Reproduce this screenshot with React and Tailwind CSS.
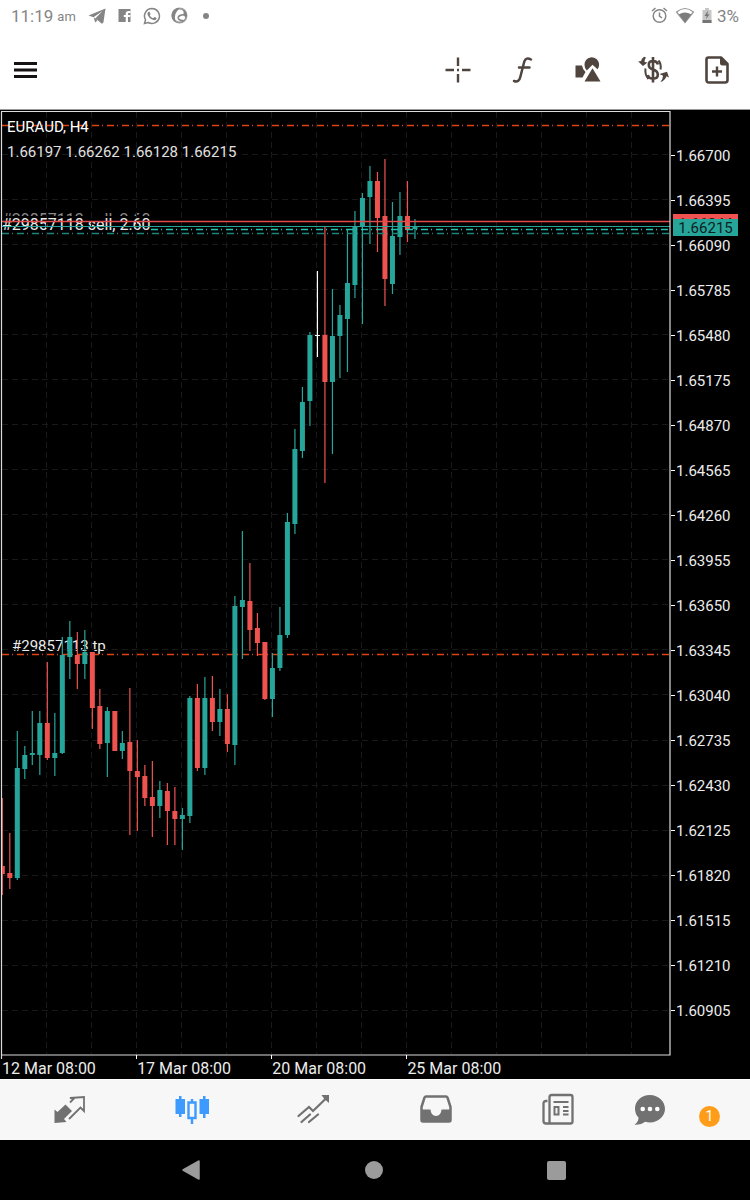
import React from "react";

const UP = "#26a69a";
const DOWN = "#ef5350";

// [high, low, bodyTop, bodyBottom, direction]
const candles = [
  [798, 895, 866, 874, "d"],
  [833, 889, 873, 878, "d"],
  [731, 880, 768, 878, "u"],
  [746, 779, 755, 769, "u"],
  [711, 765, 753, 755, "u"],
  [711, 775, 723, 755, "u"],
  [662, 760, 723, 758, "d"],
  [713, 776, 753, 758, "u"],
  [637, 754, 655, 753, "u"],
  [621, 679, 637, 657, "u"],
  [632, 689, 655, 664, "d"],
  [630, 679, 652, 664, "u"],
  [652, 729, 652, 708, "d"],
  [689, 749, 706, 744, "d"],
  [707, 777, 711, 743, "u"],
  [711, 751, 711, 751, "d"],
  [731, 759, 743, 751, "u"],
  [688, 835, 742, 771, "d"],
  [740, 831, 771, 777, "d"],
  [765, 806, 776, 798, "d"],
  [761, 837, 797, 806, "d"],
  [781, 818, 790, 806, "u"],
  [783, 845, 791, 811, "d"],
  [787, 845, 811, 819, "d"],
  [808, 850, 815, 819, "u"],
  [696, 823, 698, 816, "u"],
  [684, 771, 698, 768, "d"],
  [677, 775, 698, 768, "u"],
  [676, 731, 698, 722, "d"],
  [689, 736, 709, 722, "u"],
  [694, 752, 709, 744, "d"],
  [596, 765, 606, 745, "u"],
  [531, 659, 600, 607, "u"],
  [563, 651, 601, 630, "d"],
  [613, 656, 628, 643, "d"],
  [642, 700, 642, 699, "d"],
  [653, 717, 668, 699, "u"],
  [607, 671, 635, 668, "u"],
  [513, 638, 522, 635, "u"],
  [429, 534, 449, 524, "u"],
  [387, 458, 402, 451, "u"],
  [332, 426, 335, 401, "u"],
  [271, 357, 335, 336, "n"],
  [226, 483, 335, 382, "d"],
  [289, 454, 336, 382, "u"],
  [305, 378, 315, 336, "u"],
  [230, 372, 283, 319, "u"],
  [211, 298, 227, 285, "u"],
  [193, 324, 198, 226, "u"],
  [166, 244, 181, 197, "u"],
  [172, 252, 181, 218, "d"],
  [159, 306, 216, 279, "d"],
  [202, 294, 236, 284, "u"],
  [192, 255, 216, 237, "u"],
  [181, 242, 216, 230, "d"],
  [219, 239, 226, 229, "u"],
];

const prices = Array.from({ length: 20 }, (_, i) => (1.667 - i * 0.00305).toFixed(5));
const times = ["12 Mar 08:00", "17 Mar 08:00", "20 Mar 08:00", "25 Mar 08:00"];

function Plot() {
  return (
    <svg viewBox="0 110 671 949" preserveAspectRatio="none" className="relative block h-[949px] w-full">
      <g stroke="#181818" strokeDasharray="6 4">
        {Array.from({ length: 14 }, (_, i) => (
          <line key={i} x1={46.5 + i * 45} x2={46.5 + i * 45} y1="112" y2="1054" />
        ))}
        {prices.map((p, i) => (
          <line key={p} x1="2" x2="669" y1={Math.floor(154.5 + i * 45.04) + 0.5} y2={Math.floor(154.5 + i * 45.04) + 0.5} />
        ))}
      </g>
      <g stroke="#e0430f" strokeWidth="1.3" strokeDasharray="7 3 1 4">
        <line x1="2" x2="670" y1="125.5" y2="125.5" />
        <line x1="2" x2="670" y1="654.5" y2="654.5" />
      </g>
      {candles.map(([hi, lo, top, bottom, dir], i) => {
        const x = 2.3 + i * 7.503;
        const color = dir === "u" ? UP : dir === "d" ? DOWN : "#ffffff";
        const left = Math.max(x - 2.5, 2);
        return (
          <g key={i} fill={color}>
            <rect x={x - 0.6} y={hi} width="1.2" height={lo - hi} />
            <rect x={left} y={top} width={x + 2.5 - left} height={bottom - top} />
          </g>
        );
      })}
      <line x1="2" x2="670" y1="221.5" y2="221.5" stroke="#e04a4c" strokeWidth="1.3" />
      <line x1="2" x2="670" y1="226.5" y2="226.5" stroke={UP} />
      <line x1="151" x2="670" y1="229.5" y2="229.5" stroke="#24c4b2" strokeWidth="1.7" strokeDasharray="7 3 1 4" />
      <line x1="2" x2="670" y1="233.5" y2="233.5" stroke="#1b857b" strokeWidth="1.4" strokeDasharray="7 3 1 4" />
      <path d="M1.5 1059V111.500M1 111.500H670.500M670 111V1055.500M1 1055H670.500" stroke="#dcdcdc" strokeWidth="1.2" fill="none" />
      <path d="M136.500 1055V1059M271.500 1055V1059M406.500 1055V1059" stroke="#ffffff" fill="none" />
    </svg>
  );
}

function StatusBar() {
  return (
    <div className="flex h-[31px] items-center justify-between pl-[11px] pr-[11px] text-[17px] leading-5 text-[#858585]">
      <div className="flex items-center">
        <span>11:19</span>
        <span className="ml-1 mt-[3px] text-[13px]">am</span>
        <svg width="18" height="16" viewBox="89 8 18 16" className="ml-3" fill="#858585">
          <path d="M106.500 8.500L89.500 15.500L94.500 17.300L103.500 11L96.500 18.300L102.500 23.500Q104 23.800 104.500 22Z" />
          <path d="M94.800 17.500L96.200 22.500L98.500 20.200L96.800 18.500Z" />
        </svg>
        <svg width="13" height="13" viewBox="0 0 13 13" className="ml-3">
          <path fill="#858585" d="M0.500 0H12.500V13H10V8H12L12.300 6H10V5Q10 4 11.200 4H12.300V2H10.500Q7.700 2 7.700 4.700V6H5.800V8H7.700V13H0.500Z" />
        </svg>
        <svg width="18" height="18" viewBox="0 0 24 24" className="ml-3" fill="#858585">
          <path d="M17.472 14.382c-.297-.149-1.758-.867-2.030-.967-.273-.099-.471-.148-.670.150-.197.297-.767.966-.940 1.164-.173.199-.347.223-.644.075-.297-.150-1.255-.463-2.390-1.475-.883-.788-1.480-1.761-1.653-2.059-.173-.297-.018-.458.130-.606.134-.133.298-.347.446-.520.149-.174.198-.298.298-.497.099-.198.050-.371-.025-.520-.075-.149-.669-1.612-.916-2.207-.242-.579-.487-.500-.669-.510-.173-.008-.371-.010-.570-.010-.198 0-.520.074-.792.372-.272.297-1.040 1.016-1.040 2.479 0 1.462 1.065 2.875 1.213 3.074.149.198 2.096 3.200 5.077 4.487.709.306 1.262.489 1.694.625.712.227 1.360.195 1.871.118.571-.085 1.758-.719 2.006-1.413.248-.694.248-1.289.173-1.413-.074-.124-.272-.198-.570-.347" />
          <path d="M12 2a10 10 0 0 0-8.600 15.100L2 22l5-1.300A10 10 0 1 0 12 2Z" fill="none" stroke="#858585" strokeWidth="2" />
        </svg>
        <svg width="17" height="17" viewBox="0 0 17 17" className="ml-[10px]">
          <circle cx="8.500" cy="8.500" r="7" fill="none" stroke="#a0a0a0" strokeWidth="2" />
          <path fill="#858585" d="M9 1A7.500 7.500 0 0 0 5 15.300Q2.500 9 5.500 5Q7 2.500 9 1ZM11 1.500Q16 4 16 9L14.500 11Q14 8.500 12 8.500Q9 8.500 7.500 11Q10 13.500 14 13Q10 17 6 15.500Q10 16 11.500 14Q6 14 6.500 10Q7.500 7 12.500 7Q13 3 11 1.500Z" />
        </svg>
        <span className="ml-[15px] size-[6px] rounded-full bg-[#858585]" />
      </div>
      <div className="flex items-center">
        <svg width="17" height="17" viewBox="0 0 17 17" fill="none" stroke="#858585" strokeWidth="1.500">
          <circle cx="8.500" cy="9" r="6.300" />
          <path d="M8.500 5.500V9.200L11 11M1 4L4.500 1M16 4L12.500 1" />
        </svg>
        <svg width="20" height="17" viewBox="0 0 20 17" className="ml-[7px]">
          <path d="M1.500 5Q10-2 18.500 5L10 15.500Z" fill="none" stroke="#959595" strokeWidth="1.200" />
          <path d="M3.800 7.500Q10 3.500 16.200 7.500L10 15.500Z" fill="#7d7d7d" />
        </svg>
        <svg width="10" height="15" viewBox="0 0 10 15" className="ml-[7px]">
          <path d="M3 0H7V2H9.500V15H0.500V2H3Z" fill="#c6c6c6" />
          <path d="M0.500 12H9.500V15H0.500ZM6 2.500L2.500 8H4.700L4 11L7.500 6.500H5.500Z" fill="#767676" />
        </svg>
        <span className="ml-[5px]">3%</span>
      </div>
    </div>
  );
}

const tools = [
  {
    label: "Crosshair",
    icon: (
      <path d="M14 1.500V10M14 18V26.500M1.500 14H10M18 14H26.500M13 14H15" stroke="#50443f" strokeWidth="2.400" fill="none" />
    ),
  },
  {
    label: "Indicators",
    icon: (
      <path d="M22 3.500Q17 .8 15.300 5.500L11.300 21Q10 26.800 5 25M10 11.500H20.500" stroke="#50443f" strokeWidth="2.500" fill="none" strokeLinecap="round" />
    ),
  },
  {
    label: "Objects",
    icon: (
      <g fill="#50443f">
        <path d="M1.500 9.500H8Q8.500 13 11.500 16L8.500 21.500H1.500Z" />
        <path d="M10.500 9A7.300 7.300 0 1 1 23.500 13.200L18.500 8.700L12.800 14.500Q10.500 12 10.500 9Z" />
        <path d="M18.500 12.300L26.500 25.500H10.500Z" />
      </g>
    ),
  },
  {
    label: "Trade",
    icon: (
      <g stroke="#50443f" fill="none" strokeWidth="2.600">
        <path d="M14 1V26.500M19 8.500Q18 5 14 5Q9.800 5 9.800 8.700Q9.800 12.300 14 13.500Q18.800 15 18.800 18.700Q18.800 22.600 14 22.600Q9.500 22.600 8.800 19" />
        <path d="M6.500 12.500Q5.500 18.500 9.500 23M19.500 4.500Q22.500 8 21.500 13.500" strokeWidth="2" />
        <path d="M5 .8Q2.500 2.500 2 5L-.8 5.500L4 10L8.500 6.500L5.500 6Q5.500 3 7 1.500ZM20.500 18L28 15.800L30 21.500L27.500 20.200Q26 24.500 21.500 26Q24 23 24 19.800Z" fill="#50443f" stroke="none" />
      </g>
    ),
  },
  {
    label: "New order",
    icon: (
      <g stroke="#50443f" fill="none" strokeWidth="2.600">
        <path d="M5.500 1.500H17L23.500 8V24Q23.500 26.500 21 26.500H5Q2.500 26.500 2.500 24V3.500Q2.500 1.500 4.500 1.500Z" strokeLinejoin="round" />
        <path d="M16 1.500H18L23.500 7.500V9.500H18.500Q16 9.500 16 7Z" fill="#50443f" stroke="none" />
        <path d="M13 10.500V20.500M8 15.500H18" strokeWidth="2.400" />
      </g>
    ),
  },
];

function Toolbar() {
  return (
    <header className="flex h-[79px] items-center justify-between border-b border-[#9a9a9a]">
      <button aria-label="Menu" className="ml-[14px] flex h-10 items-center">
        <svg width="23" height="16" viewBox="0 0 23 16" fill="#161214">
          <path d="M0 0H23V3H0ZM0 6.500H23V9.500H0ZM0 13H23V16H0Z" />
        </svg>
      </button>
      <div className="flex">
        {tools.map((t) => (
          <button key={t.label} aria-label={t.label} className="flex h-10 w-[65px] items-center justify-center">
            <svg width="28" height="28" viewBox="0 0 28 28" className="overflow-visible">{t.icon}</svg>
          </button>
        ))}
      </div>
    </header>
  );
}

function Chart() {
  return (
    <main className="flex bg-black text-[15px] leading-5 text-[#ececec]">
      <div className="relative min-w-0 flex-1">
        <span className="absolute left-[2px] top-[103px] h-[3px] overflow-hidden whitespace-nowrap text-[16px] text-[#8a8a8a]">
          <span className="-mt-[3px] block">#29857113 sell, 2.60</span>
        </span>
        <span className="absolute left-[2px] top-[105px] whitespace-nowrap text-[16px]">#29857118 sell, 2.60</span>
        <span className="absolute left-[12px] top-[526px] whitespace-nowrap">#29857113 tp</span>
        <Plot />
        <div className="absolute left-[7px] top-[7px] text-white">
          <h1>EURAUD, H4</h1>
          <p className="mt-[5px] text-[#e0e0e0]">1.66197 1.66262 1.66128 1.66215</p>
        </div>
        <div className="flex h-5 pl-[2px] text-[16px]">
          {times.map((t) => (
            <span key={t} className="w-[20.2%] whitespace-nowrap">{t}</span>
          ))}
        </div>
      </div>
      <div className="relative w-[79px] pt-[23px]">
        {prices.map((p) => (
          <div key={p} className="flex h-[45px] items-center">
            <span className="h-px w-1 bg-white" />
            <span className="ml-[1px]">{p}</span>
          </div>
        ))}
        <div className="absolute left-[2px] top-[104px] h-[22px] w-[65px] overflow-hidden bg-[#f05252] text-center text-[#2a1010]">
          <span className="block h-[5px]">1.66244</span>
          <span className="relative block h-[17px] bg-[#26a69a] leading-[18px] text-[#10201e]">1.66215</span>
        </div>
      </div>
    </main>
  );
}

const tabs = [
  {
    label: "Quotes",
    icon: (
      <g>
        <path d="M1.500 30V16.500L4.500 19L12.500 11.500L19 18L11 26L13.500 29Z" fill="#717171" />
        <path d="M17 9.500L20.500 6L17 5L31 4V18L27.500 14.500L16 26" fill="none" stroke="#717171" strokeWidth="1.800" />
      </g>
    ),
  },
  {
    label: "Charts",
    icon: (
      <g fill="#3d9bff">
        <path d="M4 3H6.500V6H10V21H6.500V24H4V21H0.500V6H4ZM28 3H30.500V6H34V21H30.500V25H28V21H24.500V6H28Z" />
        <path d="M13.500 9.500H20.500V25H13.500ZM17 6V9.500M17 25V31" fill="none" stroke="#3d9bff" strokeWidth="2.400" />
      </g>
    ),
  },
  {
    label: "Trade",
    icon: (
      <g fill="none" stroke="#717171" strokeWidth="2.200">
        <path d="M1.500 23L12 14L16 18L30 4.500M4.500 29L13 21.500M12 29L21 21.500" strokeLinecap="round" />
        <path d="M24.500 2H32V10L28.500 7L27 5.500Z" fill="#717171" stroke="none" />
      </g>
    ),
  },
  {
    label: "History",
    icon: (
      <g>
        <path d="M7 3.500H27Q28 3.500 28.500 4.500L31.500 14V27Q31.500 28.500 30 28.500H4Q2.500 28.500 2.500 27V14L5.500 4.500Q6 3.500 7 3.500Z" fill="none" stroke="#717171" strokeWidth="2.500" />
        <path d="M2.500 16.500H11.500Q12 23 17 23Q22 23 22.500 16.500H31.500V28.500H2.500Z" fill="#717171" />
      </g>
    ),
  },
  {
    label: "News",
    icon: (
      <g fill="none" stroke="#717171" strokeWidth="2">
        <path d="M10.500 2H29.500Q31.500 2 31.500 4V28.500Q31.500 30.500 29.500 30.500H10.500Q8.500 30.500 8.500 28.500V4Q8.500 2 10.500 2ZM6.500 8H5Q2.500 8 2.500 10.500V28Q2.500 30.500 5 30.500H11" strokeWidth="2.300" />
        <path d="M12.500 9H27.500M22 14H27.500M22 18H27.500M22 21.500H27.500M13.500 14H17.500V21.500H13.500Z" />
      </g>
    ),
  },
];

function BottomNav() {
  return (
    <nav className="grid h-[61px] grid-cols-6 border-t border-white bg-[#f7f7f7] px-[9px]">
      {tabs.map((t) => (
        <button key={t.label} aria-label={t.label} className="flex items-center justify-center">
          <svg width="34" height="34" viewBox="0 0 34 34">{t.icon}</svg>
        </button>
      ))}
      <button aria-label="Messages, 1 new" className="flex items-center justify-center pr-[6px]">
        <svg width="32" height="32" viewBox="0 0 32 32">
          <path d="M16 1C7.500 1 1 7 1 14.500Q1 20 4.500 23.500Q4.500 28 .5 30.800Q7.500 31 11 27.800Q13.500 28.500 16 28.500C24.500 28.500 31 22 31 14.800S24.500 1 16 1Z" fill="#717171" />
          <g fill="#ffffff">
            <circle cx="8.700" cy="15" r="2.300" />
            <circle cx="16" cy="15" r="2.300" />
            <circle cx="23.300" cy="15" r="2.300" />
          </g>
        </svg>
        <span className="ml-[33px] mt-3 flex size-[21px] items-center justify-center rounded-full bg-[#ff9c1a] text-[14px] text-white">1</span>
      </button>
    </nav>
  );
}

function SystemNav() {
  return (
    <div className="grid h-[60px] grid-cols-3 bg-black pl-[13.3%] pr-[13.6%]">
      <button aria-label="Back" className="flex items-center justify-center">
        <svg width="18" height="20" viewBox="0 0 18 20">
          <path d="M1 10L17 1V19Z" fill="#9b9b9b" stroke="#9b9b9b" strokeWidth="1.500" strokeLinejoin="round" />
        </svg>
      </button>
      <button aria-label="Home" className="flex items-center justify-center">
        <span className="size-[18px] rounded-full bg-[#9b9b9b]" />
      </button>
      <button aria-label="Recent apps" className="flex items-center justify-center">
        <span className="size-[19px] rounded-[2px] bg-[#9b9b9b]" />
      </button>
    </div>
  );
}

export default function App() {
  return (
    <div className="bg-white font-['Roboto',sans-serif]">
      <StatusBar />
      <Toolbar />
      <Chart />
      <BottomNav />
      <SystemNav />
    </div>
  );
}
